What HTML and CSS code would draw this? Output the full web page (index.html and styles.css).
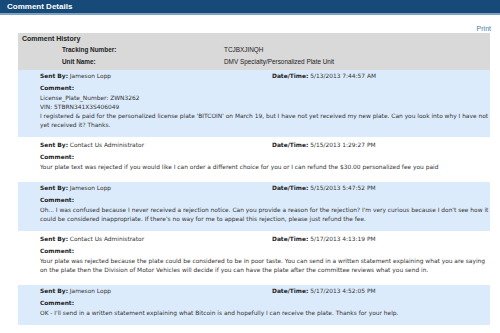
FILE: index.html
```html
<!DOCTYPE html>
<html lang="en">
<head>
    <meta charset="UTF-8">
    <title>Comment Details</title>
    <link rel="stylesheet" href="styles.css">
</head>
<body>
    <div class="titlebar">Comment Details</div>

    <div class="page">
        <div class="print-row"><a href="#" class="print">Print</a></div>

        <!-- Summary -->
        <div class="history">
            <div class="history-title">Comment History</div>
            <div class="history-row">
                <span class="history-label">Tracking Number:</span>
                <span class="history-value">TCJBXJINQH</span>
            </div>
            <div class="history-row">
                <span class="history-label">Unit Name:</span>
                <span class="history-value">DMV Specialty/Personalized Plate Unit</span>
            </div>
        </div>

        <!-- Comments -->
        <div class="entry customer">
            <div class="meta">
                <div class="sent"><b>Sent By:</b> Jameson Lopp</div>
                <div class="date"><b>Date/Time:</b> 5/13/2013 7:44:57 AM</div>
            </div>
            <div class="label">Comment:</div>
            <div class="text">License_Plate_Number: ZWN3262<br>VIN: 5TBRN341X3S406049<br>I registered &amp; paid for the personalized license plate 'BITCOIN' on March 19, but I have not yet received my new plate. Can you look into why I have not yet received it? Thanks.</div>
        </div>

        <div class="entry admin">
            <div class="meta">
                <div class="sent"><b>Sent By:</b> Contact Us Administrator</div>
                <div class="date"><b>Date/Time:</b> 5/15/2013 1:29:27 PM</div>
            </div>
            <div class="label">Comment:</div>
            <div class="text">Your plate text was rejected if you would like I can order a different choice for you or I can refund the $30.00 personalized fee you paid</div>
        </div>

        <div class="entry customer">
            <div class="meta">
                <div class="sent"><b>Sent By:</b> Jameson Lopp</div>
                <div class="date"><b>Date/Time:</b> 5/15/2013 5:47:52 PM</div>
            </div>
            <div class="label">Comment:</div>
            <div class="text">Oh... I was confused because I never received a rejection notice. Can you provide a reason for the rejection? I'm very curious because I don't see how it could be considered inappropriate. If there's no way for me to appeal this rejection, please just refund the fee.</div>
        </div>

        <div class="entry admin">
            <div class="meta">
                <div class="sent"><b>Sent By:</b> Contact Us Administrator</div>
                <div class="date"><b>Date/Time:</b> 5/17/2013 4:13:19 PM</div>
            </div>
            <div class="label">Comment:</div>
            <div class="text">Your plate was rejected because the plate could be considered to be in poor taste. You can send in a written statement explaining what you are saying on the plate then the Division of Motor Vehicles will decide if you can have the plate after the committee reviews what you send in.</div>
        </div>

        <div class="entry customer">
            <div class="meta">
                <div class="sent"><b>Sent By:</b> Jameson Lopp</div>
                <div class="date"><b>Date/Time:</b> 5/17/2013 4:52:05 PM</div>
            </div>
            <div class="label">Comment:</div>
            <div class="text">OK - I'll send in a written statement explaining what Bitcoin is and hopefully I can receive the plate. Thanks for your help.</div>
        </div>
    </div>
</body>
</html>
```

FILE: styles.css
```css
body {
    margin: 0;
    background: #fff;
    font-family: "DejaVu Sans", Verdana, sans-serif;
    font-size: 5.9px;
    color: #333;
}

.titlebar {
    height: 13px;
    line-height: 13px;
    padding-left: 7px;
    background: #174a78;
    border-bottom: 2px solid #7fa3c4;
    color: #fff;
    font-family: "Liberation Sans", Arial, sans-serif;
    font-weight: bold;
    font-size: 8px;
}

.page {
    width: 472px;
    margin-left: 18px;
}

.print-row {
    height: 18px;
    display: flex;
    justify-content: flex-end;
    align-items: flex-end;
    padding-bottom: 1px;
    box-sizing: border-box;
}

.print {
    color: #4a7aa8;
    text-decoration: none;
    font-family: "Liberation Sans", Arial, sans-serif;
    font-size: 7px;
    margin-right: -1px;
}

.history {
    background: #d9d9d9;
    padding: 1px 0 2px;
    font-family: "Liberation Sans", Arial, sans-serif;
    color: #222;
}

.history-title {
    font-weight: bold;
    font-size: 7px;
    padding-left: 4px;
    height: 10px;
    line-height: 10px;
}

.history-row {
    display: flex;
    height: 12px;
    line-height: 12px;
    font-size: 6.4px;
}

.history-label {
    width: 162px;
    padding-left: 44px;
    font-weight: bold;
}

.entry {
    padding-left: 22px;
}

.customer {
    background: #dcebfb;
    padding-bottom: 7px;
}

.admin {
    background: #fff;
    padding-top: 2px;
    padding-bottom: 10px;
}

.meta {
    display: flex;
    height: 12px;
    line-height: 12px;
}

.sent {
    width: 232px;
}

.label {
    font-weight: bold;
    height: 12px;
    line-height: 12px;
    color: #222;
}

.text {
    line-height: 9px;
    padding-right: 1.5px;
}

b {
    color: #222;
}
```
